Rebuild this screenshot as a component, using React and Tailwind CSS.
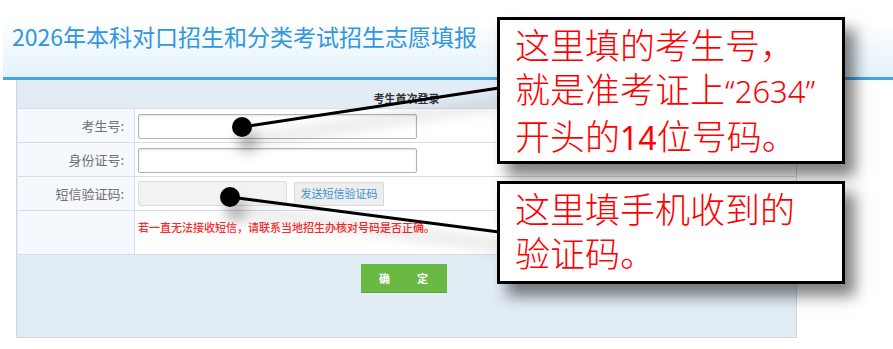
import React from 'react';

const cjk = { fontFamily: '"Noto Sans CJK SC", "Noto Sans", sans-serif' };
const latin = { fontFamily: '"Noto Sans", "Liberation Sans", sans-serif' };

const Row = ({ label, height = 'h-[34px]', children }) => (
  <div className={`grid grid-cols-[117px_1fr] border-b border-[#d3deea] ${height}`}>
    <div className="flex items-center justify-end pr-[10px] bg-[#f5f8fc] border-r border-[#d3deea] text-[13px] text-[#707070]">
      {label}
    </div>
    <div className="bg-white pl-[3px]">{children}</div>
  </div>
);

const Callout = ({ className, children }) => (
  <div
    className={`absolute left-[497px] w-[348px] bg-white border-[3px] border-black shadow-[10px_12px_14px_rgba(0,0,0,0.5)] pl-[15px] text-[35px] leading-[44px] font-light text-[#ff0000] ${className}`}
  >
    {children}
  </div>
);

const App = () => {
  return (
    <div className="relative w-[893px] h-[349px] bg-white overflow-hidden" style={cjk}>
      {/* page header */}
      <div className="ml-[3px] h-[80px] border-b-[3px] border-[#4aa2df] bg-[linear-gradient(to_bottom,#ffffff_25%,#e3f3fc)] pl-[9px] pt-[19px]">
        <h1 className="text-[23px] leading-[34px] text-[#3196dc]">2026年本科对口招生和分类考试招生志愿填报</h1>
      </div>

      {/* login panel */}
      <div className="ml-[16px] w-[781px] h-[258px] bg-[#e2ecf5] border-l border-r border-[#c9d7e5] border-b">
        <div className="h-[28px] flex justify-center items-end pb-[2px] text-[11px] font-bold text-[#333]">
          考生首次登录
        </div>
        <div className="ml-[1px] border-t border-[#d3deea]">
          <Row label="考生号:">
            <input className="mt-[5px] w-[279px] h-[25px] border border-[#b3b3b3] rounded-[2px] bg-white shadow-[inset_0_1px_2px_rgba(0,0,0,0.12)] outline-none" />
          </Row>
          <Row label="身份证号:">
            <input className="mt-[5px] w-[279px] h-[25px] border border-[#b3b3b3] rounded-[2px] bg-white shadow-[inset_0_1px_2px_rgba(0,0,0,0.12)] outline-none" />
          </Row>
          <Row label="短信验证码:">
            <div className="flex items-center h-full gap-[7px]">
              <input
                disabled
                className="w-[149px] h-[25px] border border-[#dcdcdc] rounded-[2px] bg-[#f2f2f2]"
              />
              <button className="w-[90px] h-[24px] border border-[#dadada] bg-[#eeeeee] text-[11px] text-[#3a92d4]">
                发送短信验证码
              </button>
            </div>
          </Row>
          <Row label="" height="h-[44px]">
            <p className="pt-[9px] text-[11px] leading-[14px] font-medium text-[#ff2a2a]">
              若一直无法接收短信，请联系当地招生办核对号码是否正确。
            </p>
          </Row>
        </div>
        <div className="flex justify-center pr-[6px] pt-[9px]">
          <button className="w-[86px] h-[29px] bg-[#6bb945] border-b border-[#5aa238] flex items-center justify-center gap-[27px] text-[11px] font-bold text-white">
            <span>确</span>
            <span>定</span>
          </button>
        </div>
      </div>

      {/* pointer lines */}
      <svg className="absolute left-0 top-0 pointer-events-none" width="893" height="349">
        <defs>
          <filter id="sh" x="-20%" y="-50%" width="140%" height="250%">
            <feDropShadow dx="6" dy="14" stdDeviation="7" floodColor="#000" floodOpacity="0.35" />
          </filter>
        </defs>
        <g filter="url(#sh)">
          <line x1="242" y1="127" x2="499" y2="88" stroke="#000" strokeWidth="3" />
          <circle cx="242" cy="127" r="10" fill="#000" />
          <line x1="230" y1="197" x2="499" y2="232" stroke="#000" strokeWidth="3" />
          <circle cx="230" cy="197" r="10" fill="#000" />
        </g>
      </svg>

      {/* callouts */}
      <Callout className="top-[17px] h-[147px] pt-[2px]">
        <div>这里填的考生号，</div>
        <div>
          就是准考证上<span style={latin} className="text-[31px]">“2634”</span>
        </div>
        <div>
          开头的<span style={latin} className="text-[32px] font-normal">14</span>位号码。
        </div>
      </Callout>
      <Callout className="top-[181px] h-[103px] pt-[2px]">
        <div>这里填手机收到的</div>
        <div>验证码。</div>
      </Callout>
    </div>
  );
};

export default App;
